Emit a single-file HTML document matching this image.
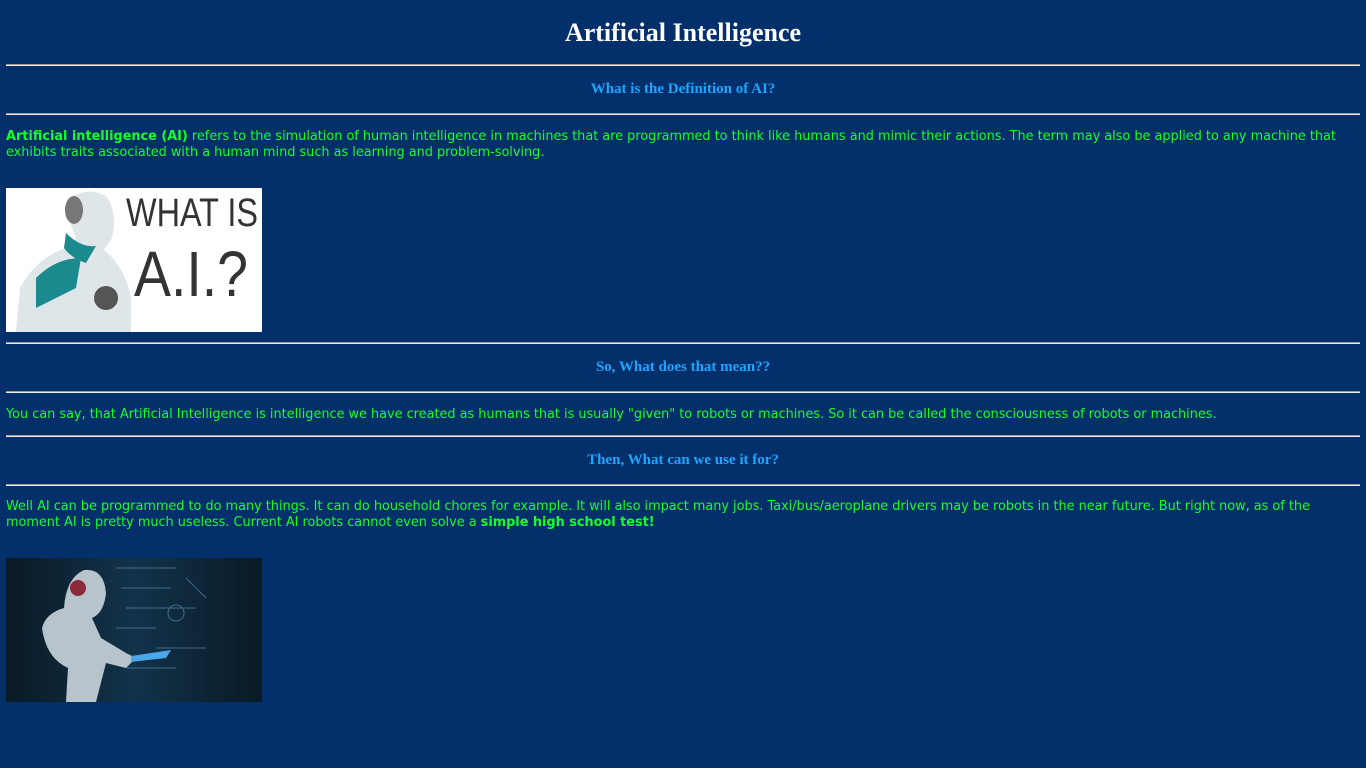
<!DOCTYPE html>
<html><head><meta charset="utf-8"><style>
html,body{margin:0;padding:0;background:#03306a;width:1366px;height:768px;overflow:hidden}
.a{position:absolute}
h1{position:absolute;margin:0;left:0;width:1366px;text-align:center;font:bold 26px "Liberation Serif",serif;color:#fff;top:18px}
.h{position:absolute;left:0;width:1366px;text-align:center;font:bold 15px "Liberation Serif",serif;color:#1ea5ff;margin:0}
.hr{position:absolute;left:6px;width:1354px;height:0;border-top:1px solid #9a9a9a;border-bottom:1px solid #eee}
.p{position:absolute;left:6px;width:1350px;font:12.85px/16px "DejaVu Sans",Verdana,sans-serif;color:#14ff2a;margin:0}
b{font-weight:bold}
</style></head><body>
<h1>Artificial Intelligence</h1>
<div class="hr" style="top:64px"></div>
<div class="h" style="top:81px">What is the Definition of AI?</div>
<div class="hr" style="top:113px"></div>
<p class="p" style="top:129px"><b>Artificial intelligence (AI)</b> refers to the simulation of human intelligence in machines that are programmed to think like humans and mimic their actions. The term may also be applied to any machine that exhibits traits associated with a human mind such as learning and problem-solving.</p>
<svg class="a" style="left:6px;top:188px" width="256" height="144" viewBox="0 0 256 144">
<rect width="256" height="144" fill="#fff"/>
<path d="M10 144 L14 100 Q30 70 60 60 L70 50 Q60 30 65 10 Q80 -2 100 8 Q112 25 106 50 L98 62 Q120 80 125 110 L125 144Z" fill="#dfe6ea"/>
<path d="M30 90 Q50 70 75 70 L70 100 Q50 110 30 120Z" fill="#1a8a8e"/>
<path d="M60 45 Q75 60 90 58 L80 75 Q65 70 58 60Z" fill="#1a8a8e"/>
<circle cx="100" cy="110" r="12" fill="#555"/>
<ellipse cx="68" cy="22" rx="9" ry="14" fill="#777"/>
<text x="120" y="38" font-family="Liberation Sans,sans-serif" font-size="40" fill="#333" textLength="132" lengthAdjust="spacingAndGlyphs">WHAT IS</text>
<text x="128" y="108" font-family="Liberation Sans,sans-serif" font-size="64" fill="#333" textLength="114" lengthAdjust="spacingAndGlyphs">A.I.?</text>
</svg>
<div class="hr" style="top:342px"></div>
<div class="h" style="top:359px">So, What does that mean??</div>
<div class="hr" style="top:391px"></div>
<p class="p" style="top:407px">You can say, that Artificial Intelligence is intelligence we have created as humans that is usually "given" to robots or machines. So it can be called the consciousness of robots or machines.</p>
<div class="hr" style="top:435px"></div>
<div class="h" style="top:452px">Then, What can we use it for?</div>
<div class="hr" style="top:484px"></div>
<p class="p" style="top:499px">Well AI can be programmed to do many things. It can do household chores for example. It will also impact many jobs. Taxi/bus/aeroplane drivers may be robots in the near future. But right now, as of the moment AI is pretty much useless. Current AI robots cannot even solve a <b>simple high school test!</b></p>
<svg class="a" style="left:6px;top:558px" width="256" height="144" viewBox="0 0 256 144">
<defs><linearGradient id="g" x1="0" x2="1"><stop offset="0" stop-color="#0a1a26"/><stop offset=".5" stop-color="#12324a"/><stop offset="1" stop-color="#0a1a26"/></linearGradient></defs>
<rect width="256" height="144" fill="url(#g)"/>
<g stroke="#6fb0d0" stroke-width="1" opacity=".5" fill="none"><path d="M110 10 h60 M115 30 h50 M120 50 h70 M110 70 h40 M150 90 h50 M120 110 h50 M180 20 l20 20"/><circle cx="170" cy="55" r="8"/></g>
<path d="M60 144 L62 110 Q40 100 36 70 Q40 55 58 50 Q60 20 78 12 Q98 10 100 35 Q98 55 86 60 L95 80 L120 95 L130 100 L120 110 L100 105 L90 144Z" fill="#b8c4cc"/>
<circle cx="72" cy="30" r="8" fill="#8a2a3a"/>
<path d="M125 98 L165 92 L160 100 L125 104Z" fill="#4aa8e8"/>
</svg>
</body></html>
